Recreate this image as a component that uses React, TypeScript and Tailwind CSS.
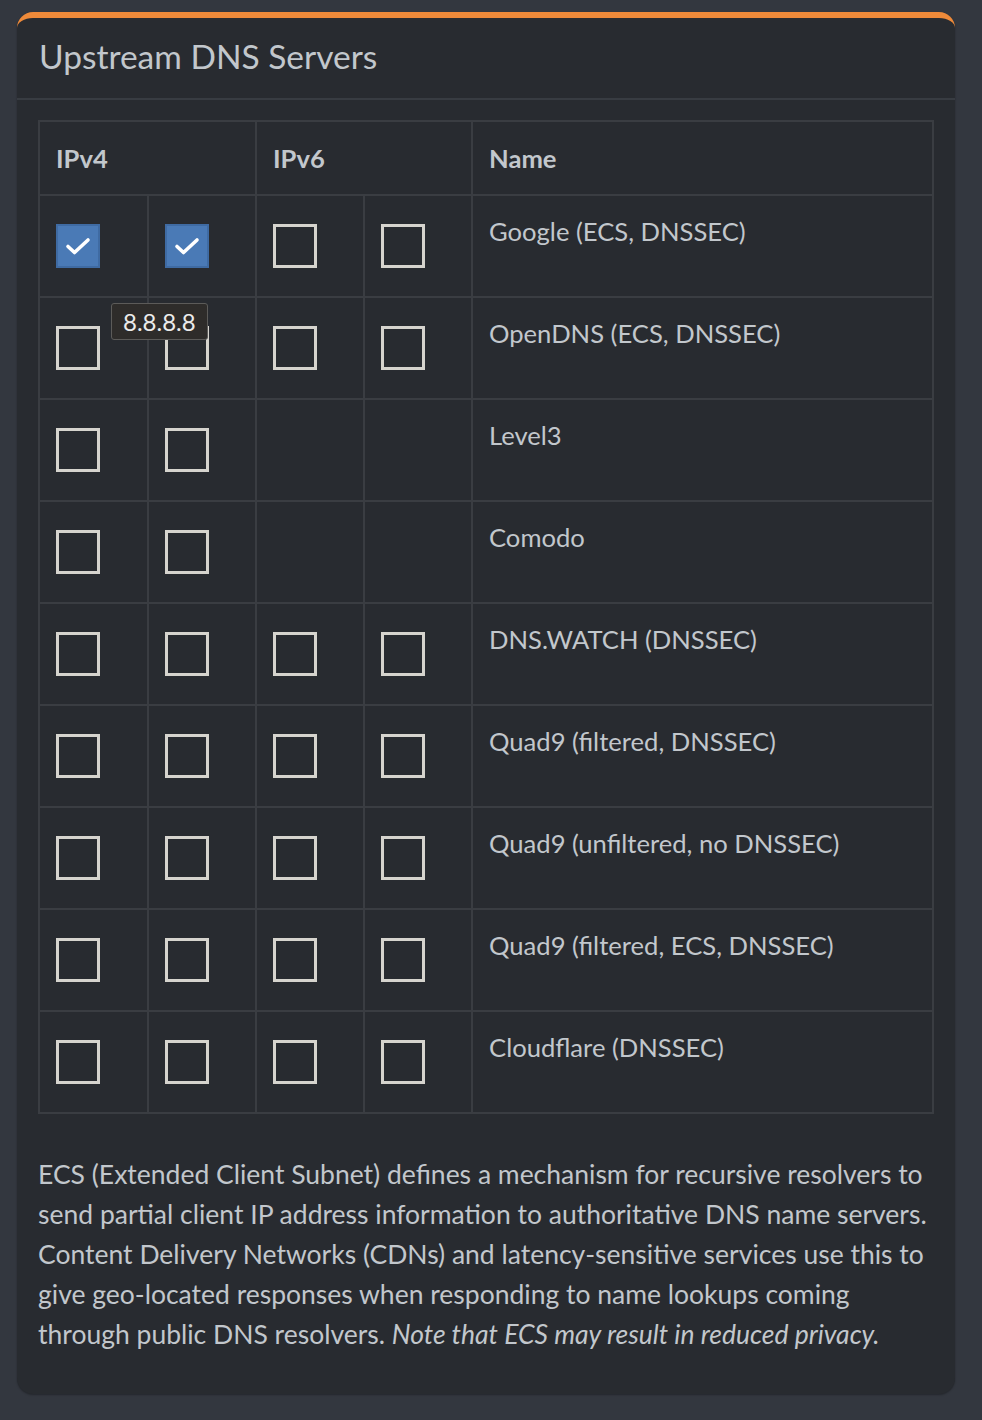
const ROWS: { name: string; v4: [boolean, boolean]; v6: [boolean, boolean] | null }[] = [
  { name: "Google (ECS, DNSSEC)", v4: [true, true], v6: [false, false] },
  { name: "OpenDNS (ECS, DNSSEC)", v4: [false, false], v6: [false, false] },
  { name: "Level3", v4: [false, false], v6: null },
  { name: "Comodo", v4: [false, false], v6: null },
  { name: "DNS.WATCH (DNSSEC)", v4: [false, false], v6: [false, false] },
  { name: "Quad9 (filtered, DNSSEC)", v4: [false, false], v6: [false, false] },
  { name: "Quad9 (unfiltered, no DNSSEC)", v4: [false, false], v6: [false, false] },
  { name: "Quad9 (filtered, ECS, DNSSEC)", v4: [false, false], v6: [false, false] },
  { name: "Cloudflare (DNSSEC)", v4: [false, false], v6: [false, false] },
];

function Box({ checked }: { checked: boolean }) {
  if (checked) {
    return (
      <div className="w-[44px] h-[44px] bg-[#4a7ab6] border-2 border-[#3f6ba3] flex items-center justify-center">
        <svg width="26" height="20" viewBox="0 0 26 20" fill="none">
          <path d="M3 10.5l6.5 6L23 4" stroke="#ffffff" strokeWidth="3.6" strokeLinecap="round" strokeLinejoin="round" />
        </svg>
      </div>
    );
  }
  return <div className="w-[44px] h-[44px] border-[3px] border-[#d6d4ce]" />;
}

function BoxCell({ checked }: { checked?: boolean }) {
  return (
    <td className="border-2 border-[#3a3d42] align-top pl-4 pt-[28px]">
      {checked !== undefined && <Box checked={checked} />}
    </td>
  );
}

export default function App() {
  return (
    <div
      className="min-h-[1420px] bg-[#33373f] pt-3 pl-[17px] pb-6"
      style={{ fontFamily: "Lato, 'Noto Sans', sans-serif" }}
    >
      <div className="w-[938px] bg-[#282b30] rounded-2xl border-t-[6px] border-[#ee8a3a] shadow-[0_1px_2px_rgba(0,0,0,0.3)]">
        <div className="h-[82px] flex items-center px-[22px] border-b-2 border-[#383c42]">
          <h3 className="text-[33.5px] text-[#c2c7cc] leading-none -mt-[2px]">Upstream DNS Servers</h3>
        </div>
        <div className="pt-[20px] pl-[21px] pr-[21px] pb-[40px]">
          <div className="relative">
            <table className="w-[896px] table-fixed border-collapse text-[#c2c7cc] text-[25.6px]">
              <colgroup>
                <col className="w-[109px]" />
                <col className="w-[108px]" />
                <col className="w-[108px]" />
                <col className="w-[108px]" />
                <col />
              </colgroup>
              <thead>
                <tr className="h-[74px]">
                  <th colSpan={2} className="border-2 border-[#3a3d42] text-left font-bold px-4 align-middle">IPv4</th>
                  <th colSpan={2} className="border-2 border-[#3a3d42] text-left font-bold px-4 align-middle">IPv6</th>
                  <th className="border-2 border-[#3a3d42] text-left font-bold px-4 align-middle">Name</th>
                </tr>
              </thead>
              <tbody>
                {ROWS.map((r) => (
                  <tr key={r.name} className="h-[102px]">
                    <BoxCell checked={r.v4[0]} />
                    <BoxCell checked={r.v4[1]} />
                    <BoxCell checked={r.v6 ? r.v6[0] : undefined} />
                    <BoxCell checked={r.v6 ? r.v6[1] : undefined} />
                    <td className="border-2 border-[#3a3d42] align-top px-4 pt-[15px] leading-[40px]">{r.name}</td>
                  </tr>
                ))}
              </tbody>
            </table>
            <div className="absolute left-[73px] top-[183px] bg-[#2e2c2a] border border-[#5c5b59] rounded-[3px] px-[11px] h-[37px] flex items-center text-[24px] text-[#ebebeb]">
              8.8.8.8
            </div>
          </div>
          <p className="mt-[40px] text-[26.5px] leading-[40px] text-[#c2c7cc] whitespace-nowrap">
            ECS (Extended Client Subnet) defines a mechanism for recursive resolvers to
            <br />
            send partial client IP address information to authoritative DNS name servers.
            <br />
            Content Delivery Networks (CDNs) and latency-sensitive services use this to
            <br />
            give geo-located responses when responding to name lookups coming
            <br />
            through public DNS resolvers. <em>Note that ECS may result in reduced privacy.</em>
          </p>
        </div>
      </div>
    </div>
  );
}
